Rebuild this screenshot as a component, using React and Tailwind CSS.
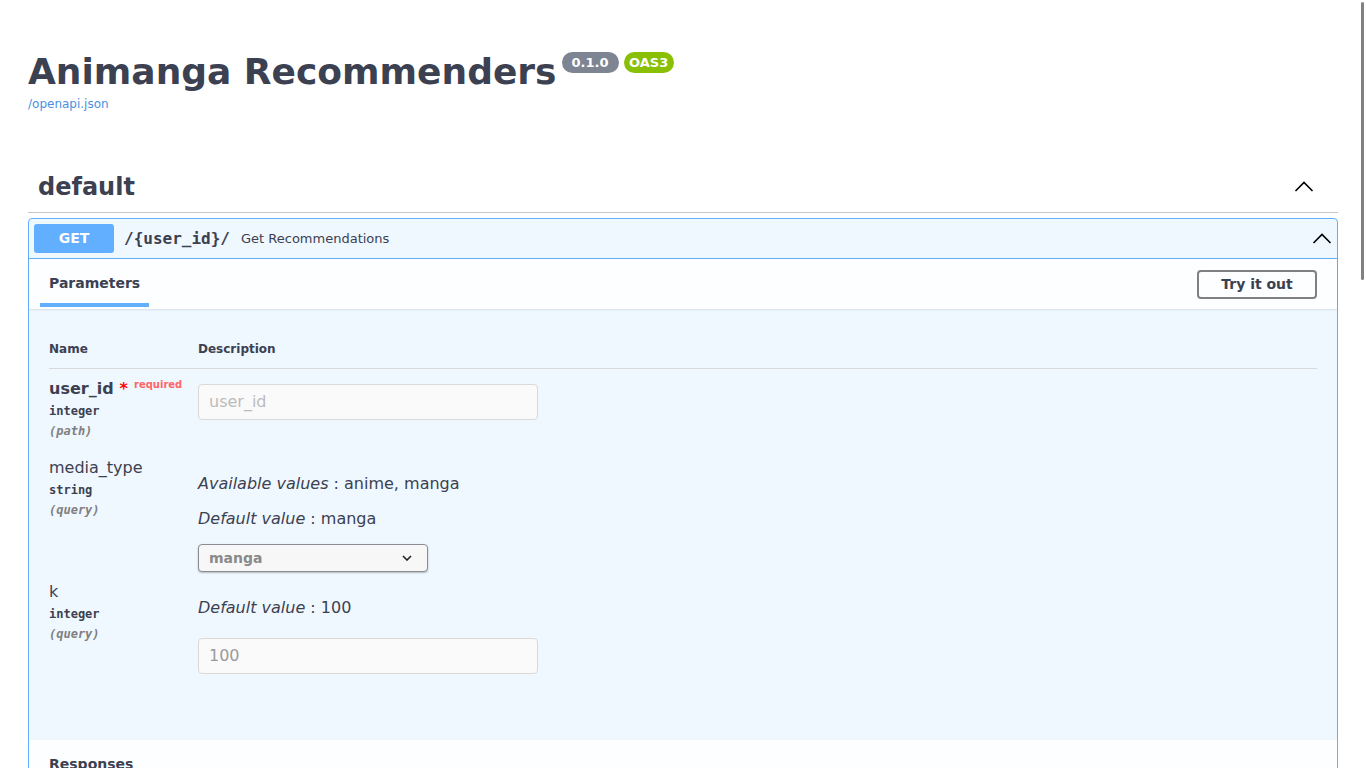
import React from 'react'

const Chevron = ({ className }) => (
  <svg viewBox="0 0 20 20" width="20" height="20" className={className}>
    <polyline points="1.5,14 10,5.5 18.5,14" fill="none" stroke="#000" strokeWidth="1.6" />
  </svg>
)

const ParamMeta = ({ type, where }) => (
  <>
    <div className="mt-[3px] font-['DejaVu_Sans_Mono'] text-[12px] leading-[18px] font-bold">{type}</div>
    <div className="mt-[2px] font-['DejaVu_Sans_Mono'] text-[12px] leading-[18px] font-bold italic text-[#808080]">{where}</div>
  </>
)

export default function App() {
  return (
    <div className="relative h-[768px] overflow-hidden bg-white font-['DejaVu_Sans',sans-serif] text-[#3b4151]">
      {/* overlay scrollbar */}
      <div className="absolute right-[2px] top-[2px] h-[278px] w-[3px] rounded-full bg-[#808080]" />

      <div className="px-[28px] pt-[54px]">
        {/* info */}
        <div className="flex items-start">
          <h1 className="text-[36px] font-bold leading-[36px]">Animanga Recommenders</h1>
          <span className="ml-[5px] mt-[-2px] flex h-[21px] items-center rounded-full bg-[#7d8492] px-[10px] text-[13px] font-bold text-white">0.1.0</span>
          <span className="ml-[5px] mt-[-2px] flex h-[21px] items-center rounded-full bg-[#89bf04] px-[5.5px] text-[13px] font-bold text-white">OAS3</span>
        </div>
        <div className="mt-[8px] text-[12px] leading-[12px] text-[#4990e2]">/openapi.json</div>

        {/* tag section */}
        <div className="mt-[51px] flex items-center justify-between border-b border-[#c4c6cb] pb-[9px] pl-[10px] pr-[24px] pt-[10px]">
          <h3 className="text-[24px] font-bold leading-[32px]">default</h3>
          <Chevron />
        </div>

        <div className="mt-[5px] rounded-[4px] border border-[#61affe] bg-[#eff7ff]">
          {/* summary */}
          <div className="flex h-[40px] items-center border-b border-[#61affe] pl-[5px] pr-[5px]">
            <span className="flex h-[29px] w-[80px] items-center justify-center rounded-[3px] bg-[#61affe] text-[14px] font-bold text-white">GET</span>
            <span className="ml-[10px] font-['DejaVu_Sans_Mono'] text-[16px] font-bold">/{'{'}user_id{'}'}/</span>
            <span className="ml-[11px] text-[13px]">Get Recommendations</span>
            <div className="flex-1" />
            <Chevron />
          </div>

          {/* parameters header */}
          <div className="flex h-[50px] items-center justify-between bg-[#fcfeff] pl-[20px] pr-[20px] shadow-[0_1px_2px_rgba(0,0,0,0.1)]">
            <div className="relative mt-[-2px] text-[14px] font-bold leading-[17px]">
              Parameters
              <span className="absolute -bottom-[15px] left-[-10%] h-[4px] w-[120%] bg-[#61affe]" />
            </div>
            <button className="h-[29px] w-[120px] rounded-[4px] border-2 border-[#808080] text-[14px] font-bold">Try it out</button>
          </div>

          {/* parameters table */}
          <div className="h-[431px] px-[20px]">
            <div className="flex border-b border-[#d8d9dc] pb-[12px] pt-[33px] text-[12px] font-bold leading-[14px]">
              <div className="w-[149px]">Name</div>
              <div>Description</div>
            </div>

            <div className="flex h-[78px]">
              <div className="w-[149px] pt-[10px]">
                <div className="flex items-start text-[16px] font-bold leading-[20px]">
                  user_id<span className="ml-[6px] text-[red]">*</span>
                  <span className="ml-[6px] mt-[-2px] text-[10px] leading-[16px] text-[#ff6666]">required</span>
                </div>
                <ParamMeta type="integer" where="(path)" />
              </div>
              <div className="pt-[15px]">
                <div className="flex h-[36px] w-[340px] items-center rounded-[4px] border border-[#d9d9d9] bg-[#fafafa] px-[10px] text-[16px] text-[#bcbcbc]">user_id</div>
              </div>
            </div>

            <div className="flex h-[124px]">
              <div className="w-[149px] pt-[11px]">
                <div className="text-[16px] leading-[20px]">media_type</div>
                <ParamMeta type="string" where="(query)" />
              </div>
              <div className="pt-[27px] text-[16px] leading-[20px]">
                <div><i>Available values</i> : anime, manga</div>
                <div className="mt-[15px]"><i>Default value</i> : manga</div>
                <div className="mt-[15px] flex h-[28px] w-[230px] items-center justify-between rounded-[4px] border border-[#8a8c93] bg-[#f7f7f7] pl-[10px] pr-[15px] shadow-[0_1px_2px_rgba(0,0,0,0.25)]">
                  <span className="text-[14px] font-bold text-[#8a8a8a]">manga</span>
                  <svg viewBox="0 0 10 6" width="10" height="6">
                    <polyline points="1,1 5,5 9,1" fill="none" stroke="#222" strokeWidth="1.6" />
                  </svg>
                </div>
              </div>
            </div>

            <div className="flex">
              <div className="w-[149px] pt-[11px]">
                <div className="text-[16px] leading-[20px]">k</div>
                <ParamMeta type="integer" where="(query)" />
              </div>
              <div className="pt-[27px] text-[16px] leading-[20px]">
                <div><i>Default value</i> : 100</div>
                <div className="mt-[20px] flex h-[36px] w-[340px] items-center rounded-[4px] border border-[#d9d9d9] bg-[#fafafa] px-[10px] text-[16px] text-[#9a9a9a]">100</div>
              </div>
            </div>
          </div>

          {/* responses header */}
          <div className="h-[60px] bg-[#fcfeff] pl-[20px] pt-[16px] text-[14px] font-bold leading-[17px]">Responses</div>
        </div>
      </div>
    </div>
  )
}
